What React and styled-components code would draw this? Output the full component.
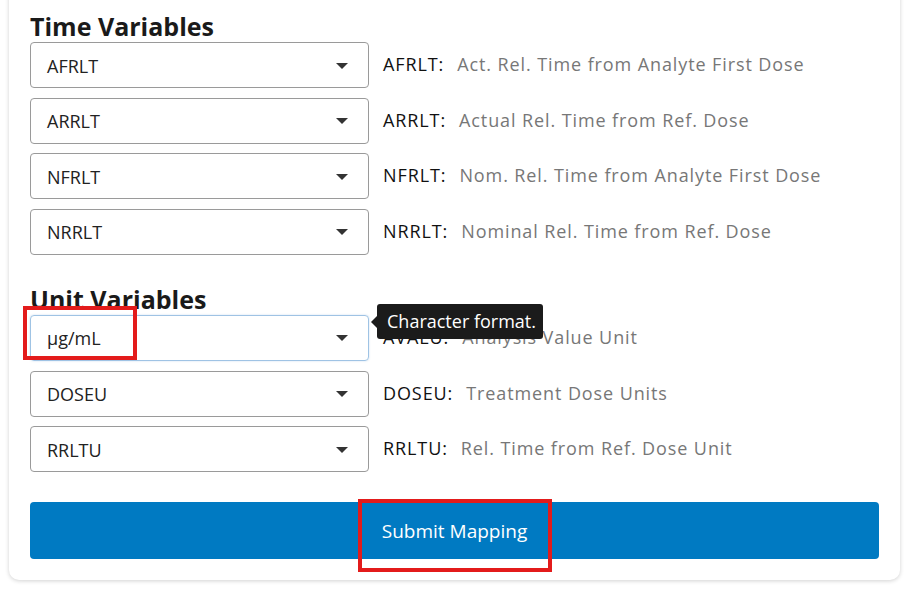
import React from "react";
import styled, { createGlobalStyle } from "styled-components";

const GlobalStyle = createGlobalStyle`
  html, body {
    margin: 0;
    padding: 0;
    background: #ffffff;
    font-family: "Open Sans", "Liberation Sans", sans-serif;
    overflow: hidden;
  }
`;

const Page = styled.div`
  padding: 0 16px 20px 9px;
`;

const Card = styled.div`
  margin-top: -30px;
  padding: 30px 21px 21px 21px;
  background: #ffffff;
  border-radius: 10px;
  box-shadow: 0 1px 4px rgba(0, 0, 0, 0.18);
`;

const SectionTitle = styled.h3`
  margin: ${(p) => (p.$first ? "12px" : "30px")} 0 1px 0;
  font-size: 25px;
  line-height: 29px;
  font-weight: 700;
  color: #1a1a1a;
`;

const Row = styled.div`
  position: relative;
  display: flex;
  align-items: center;
  gap: 14px;
  margin-bottom: 9.67px;
`;

const SelectBox = styled.div`
  position: relative;
  box-sizing: border-box;
  width: 339px;
  height: 46px;
  flex-shrink: 0;
  display: flex;
  align-items: center;
  justify-content: space-between;
  padding: 1px 20px 0 16px;
  border: 1px solid ${(p) => (p.$focused ? "#9fc3e4" : "#9a9a9a")};
  border-radius: 4px;
  box-shadow: ${(p) => (p.$focused ? "0 0 2px rgba(90,150,210,0.35)" : "none")};
  font-size: 18px;
  color: #222;
`;

const Caret = styled.span`
  width: 0;
  height: 0;
  border-left: 6px solid transparent;
  border-right: 6px solid transparent;
  border-top: 6px solid #333;
`;

const Label = styled.div`
  font-size: 18px;
  letter-spacing: 0.9px;
  color: #777;
  white-space: nowrap;
  margin-top: -2px;
`;

const Key = styled.span`
  color: #111;
  margin-right: 13px;
`;

const Tooltip = styled.div`
  position: absolute;
  left: 347px;
  top: -11px;
  padding: 5px 7px 5px 10px;
  background: #1b1b1b;
  color: #ffffff;
  font-size: 18px;
  line-height: 25px;
  border-radius: 3px;
  white-space: nowrap;
  z-index: 2;

  &::before {
    content: "";
    position: absolute;
    left: -6px;
    top: 12px;
    border-top: 6px solid transparent;
    border-bottom: 6px solid transparent;
    border-right: 6px solid #1b1b1b;
  }
`;

const Highlight = styled.div`
  position: absolute;
  box-sizing: border-box;
  border: 4px solid #e31b1b;
  pointer-events: none;
  z-index: 3;
`;

const Button = styled.button`
  position: relative;
  display: block;
  width: 100%;
  height: 57px;
  margin-top: 30px;
  border: none;
  border-radius: 4px;
  background: #007ac2;
  color: #ffffff;
  font-family: "Open Sans", "Liberation Sans", sans-serif;
  font-size: 19px;
  font-weight: 500;
  cursor: pointer;
`;

const timeVars = [
  ["AFRLT", "AFRLT:", "Act. Rel. Time from Analyte First Dose"],
  ["ARRLT", "ARRLT:", "Actual Rel. Time from Ref. Dose"],
  ["NFRLT", "NFRLT:", "Nom. Rel. Time from Analyte First Dose"],
  ["NRRLT", "NRRLT:", "Nominal Rel. Time from Ref. Dose"],
];

const unitVars = [
  ["µg/mL", "AVALU:", "Analysis Value Unit"],
  ["DOSEU", "DOSEU:", "Treatment Dose Units"],
  ["RRLTU", "RRLTU:", "Rel. Time from Ref. Dose Unit"],
];

function MappingRow({ value, keyName, desc, focused }) {
  return (
    <Row>
      <SelectBox $focused={focused}>
        <span>{value}</span>
        <Caret />
      </SelectBox>
      <Label>
        <Key>{keyName}</Key>
        {desc}
      </Label>
      {focused && (
        <>
          <Tooltip>Character format.</Tooltip>
          <Highlight style={{ left: -7, top: -9, width: 114, height: 54 }} />
        </>
      )}
    </Row>
  );
}

export default function App() {
  return (
    <>
      <GlobalStyle />
      <Page>
        <Card>
          <SectionTitle $first>Time Variables</SectionTitle>
          {timeVars.map(([v, k, d]) => (
            <MappingRow key={k} value={v} keyName={k} desc={d} />
          ))}
          <SectionTitle>Unit Variables</SectionTitle>
          {unitVars.map(([v, k, d], i) => (
            <MappingRow key={k} value={v} keyName={k} desc={d} focused={i === 0} />
          ))}
          <Button>
            Submit Mapping
            <Highlight style={{ left: 328, top: -3, width: 194, height: 73 }} />
          </Button>
        </Card>
      </Page>
    </>
  );
}
